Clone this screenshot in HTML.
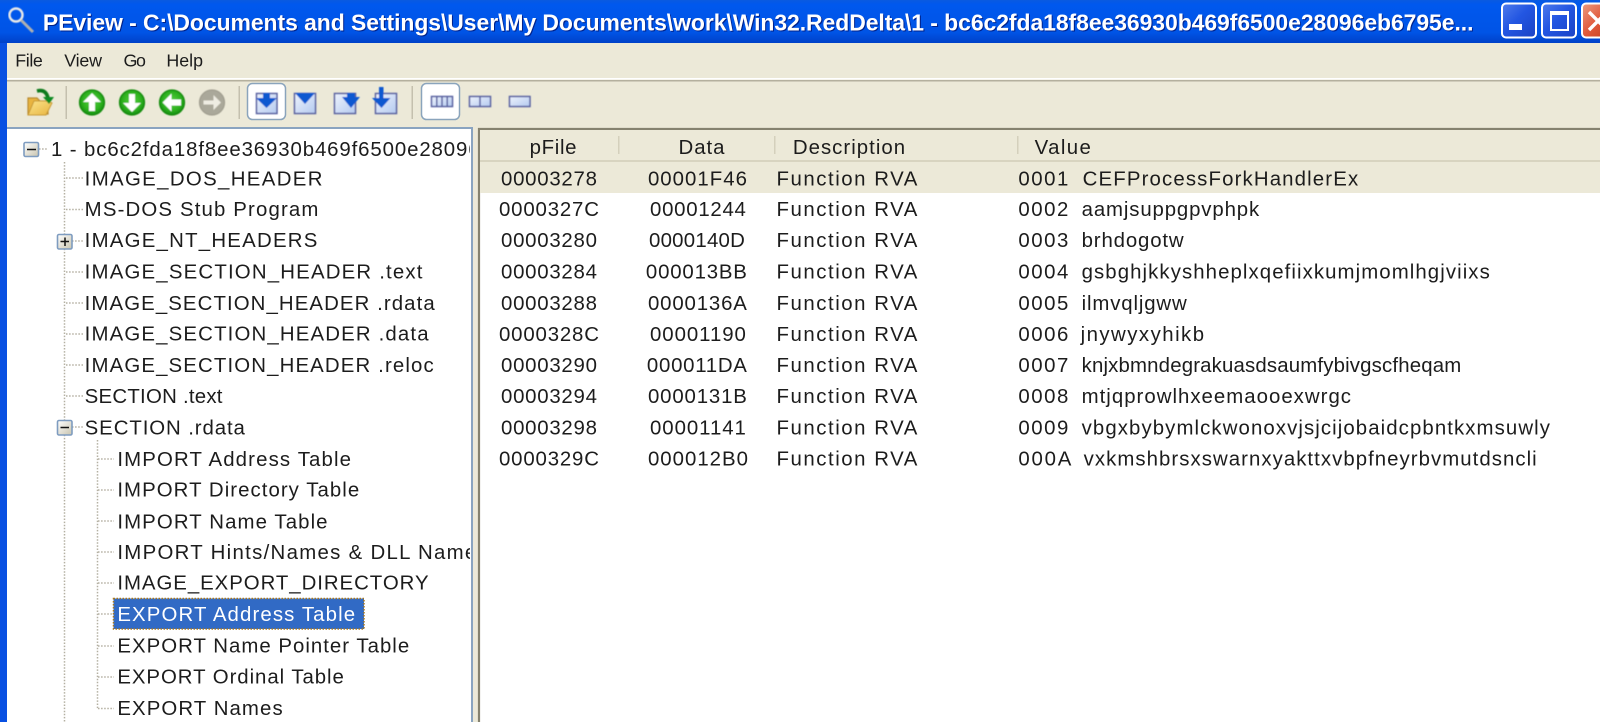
<!DOCTYPE html>
<html><head><meta charset="utf-8"><title>PEview</title>
<style>
html,body{margin:0;padding:0;background:#ece9d8;overflow:hidden}
svg{display:block}
text{font-family:"Liberation Sans",sans-serif;fill:#1c1c1c;white-space:pre}
.t text{font-size:20px}
.d{stroke:#b4b0a2;stroke-width:1.5;stroke-dasharray:1.5 1.6;fill:none}
</style></head><body>
<svg xmlns="http://www.w3.org/2000/svg" width="1600" height="722" viewBox="0 0 1600 722">
<defs>
<linearGradient id="tb" x1="0" y1="0" x2="0" y2="1"><stop offset="0" stop-color="#0a5ae0"/><stop offset=".1" stop-color="#0058ee"/><stop offset=".75" stop-color="#0054e6"/><stop offset="1" stop-color="#0041c8"/></linearGradient>
<linearGradient id="bb" x1="0" y1="0" x2="1" y2="1"><stop offset="0" stop-color="#4f7cec"/><stop offset=".45" stop-color="#2356e2"/><stop offset="1" stop-color="#1a42c4"/></linearGradient>
<linearGradient id="rb" x1="0" y1="0" x2="1" y2="1"><stop offset="0" stop-color="#ec9a80"/><stop offset=".5" stop-color="#e0583a"/><stop offset="1" stop-color="#c03a1c"/></linearGradient>
<radialGradient id="gc" cx=".5" cy=".45" r=".55"><stop offset="0" stop-color="#56d040"/><stop offset=".7" stop-color="#2cb01e"/><stop offset="1" stop-color="#128a0e"/></radialGradient>
<linearGradient id="ib" x1="0" y1="0" x2="1" y2="1"><stop offset="0" stop-color="#eef3fc"/><stop offset="1" stop-color="#b4caf0"/></linearGradient>
<linearGradient id="ex" x1="0" y1="0" x2="1" y2="1"><stop offset="0" stop-color="#fff"/><stop offset="1" stop-color="#c8c4ae"/></linearGradient>
<linearGradient id="fo" x1="0" y1="0" x2="1" y2="1"><stop offset="0" stop-color="#fbe58c"/><stop offset="1" stop-color="#e8b440"/></linearGradient>
<clipPath id="lc"><rect x="0" y="130" width="470" height="592"/></clipPath>
<filter id="bl" x="-5%" y="-5%" width="110%" height="110%"><feGaussianBlur stdDeviation=".35"/></filter>
<filter id="bi" x="-5%" y="-20%" width="110%" height="140%"><feGaussianBlur stdDeviation=".5"/></filter>
</defs>

<rect width="1600" height="722" fill="#ece9d8"/>
<rect x="0" y="0" width="1600" height="43" fill="url(#tb)"/>
<rect x="0" y="43" width="7" height="679" fill="#0850e2"/>

<!-- title icon -->
<g fill="none" filter="url(#bi)">
<circle cx="16" cy="15" r="6.5" stroke="#e8e8e8" stroke-width="2.4"/>
<path d="M21 20 L33 32" stroke="#b0b0b0" stroke-width="3"/>
</g>

<!-- title -->
<g transform="scale(1.0204 1.0198)" filter="url(#bl)">
<text x="43" y="31" font-size="22.5" font-weight="700" textLength="1402" style="fill:#00208a">PEview - C:\Documents and Settings\User\My Documents\work\Win32.RedDelta\1 - bc6c2fda18f8ee36930b469f6500e28096eb6795e...</text>
<text x="42" y="30" font-size="22.5" font-weight="700" textLength="1402" style="fill:#fff">PEview - C:\Documents and Settings\User\My Documents\work\Win32.RedDelta\1 - bc6c2fda18f8ee36930b469f6500e28096eb6795e...</text>
</g>

<!-- window buttons -->
<rect x="1502" y="3.500" width="34" height="34" rx="4" fill="url(#bb)" stroke="#fff" stroke-width="2"/>
<rect x="1509" y="24" width="13" height="6" fill="#fff"/>
<rect x="1542" y="3.500" width="34" height="34" rx="4" fill="url(#bb)" stroke="#fff" stroke-width="2"/>
<rect x="1551" y="13" width="17" height="17" fill="none" stroke="#fff" stroke-width="2"/>
<rect x="1550" y="11" width="19" height="4" fill="#fff"/>
<rect x="1582" y="3.500" width="34" height="34" rx="4" fill="url(#rb)" stroke="#fff" stroke-width="2"/>
<path d="M1589 12 L1607 30 M1607 12 L1589 30" stroke="#fff" stroke-width="3.400"/>

<!-- menu -->
<g transform="scale(1.0204 1.0198)" filter="url(#bl)">
<text x="15" y="65" font-size="17.500" textLength="27">File</text>
<text x="63" y="65" font-size="17.500" textLength="37">View</text>
<text x="121" y="65" font-size="17.500" textLength="22">Go</text>
<text x="163" y="65" font-size="17.500" textLength="36">Help</text>
</g>
<rect x="7" y="78" width="1593" height="1.500" fill="#fff"/>
<rect x="7" y="80" width="1593" height="1.500" fill="#b4b09e"/>

<!-- toolbar -->
<g filter="url(#bi)">
<path d="M28 98 h9 l3 3 h8 v13 h-20 z" fill="#e8b440" stroke="#b8892e" stroke-width="1.200"/>
<path d="M28 115 l6 -14 h14 l4 2 l-6 12 z" fill="url(#fo)" stroke="#c89a36" stroke-width="1"/>
<path d="M37 91 q9 -2 11 7" fill="none" stroke="#0e7a1c" stroke-width="3.600"/>
<path d="M43 97 h11 l-5 7 z" fill="#0e8a20"/>

<circle cx="92" cy="102.500" r="12.500" fill="url(#gc)" stroke="#128a0e" stroke-width="1.200"/>
<path d="M92 93 L101 102 H95 V111 H89 V102 H83 z" fill="#fff"/>
<circle cx="132" cy="102.500" r="12.500" fill="url(#gc)" stroke="#128a0e" stroke-width="1.200"/>
<path d="M132 112 L141 103 H135 V94 H129 V103 H123 z" fill="#fff"/>
<circle cx="172" cy="102.500" r="12.500" fill="url(#gc)" stroke="#128a0e" stroke-width="1.200"/>
<path d="M162.500 102.500 L171.500 93.500 V99.500 H181 V105.500 H171.500 V111.500 z" fill="#fff"/>
<circle cx="212" cy="102.500" r="12.500" fill="#aaa89a" stroke="#a09e90" stroke-width="1.200"/>
<path d="M221 102.500 L213.500 95 V100.500 H203.500 V104.500 H213.500 V110 z" fill="#eeece2"/>

<rect x="256.500" y="93.500" width="20.500" height="20" fill="url(#ib)" stroke="#5860a0" stroke-width="1.500"/>
<path d="M263 93 h7 v5 h7 l-10.500 10 l-10.500 -10 h7 z" fill="#0a58d0"/>
<rect x="294.500" y="93.500" width="21" height="20" fill="url(#ib)" stroke="#5860a0" stroke-width="1.500"/>
<path d="M295 93 h20 l-10 11 z" fill="#0a58d0"/>
<rect x="334.500" y="93.500" width="21" height="20" fill="url(#ib)" stroke="#5860a0" stroke-width="1.500"/>
<path d="M347 93 h8 v4 h5 l-9 11 l-9 -11 h5 z" fill="#0a58d0"/>
<rect x="375.500" y="93.500" width="21" height="20" fill="url(#ib)" stroke="#5860a0" stroke-width="1.500"/>
<path d="M379 87 h4.500 v11 h7 l-9 10 l-9.500 -10 h7 z" fill="#0a58d0"/>
</g>
<rect x="65.500" y="86" width="1.500" height="33" fill="#c4c0ae"/>
<rect x="238.500" y="86" width="1.500" height="33" fill="#c4c0ae"/>
<rect x="411.500" y="86" width="1.500" height="33" fill="#c4c0ae"/>

<rect x="247.500" y="83.500" width="38" height="36" rx="5" fill="#fff" stroke="#8aa4bc" stroke-width="1.500"/>
<g filter="url(#bi)">
<rect x="256.500" y="93.500" width="20.500" height="20" fill="url(#ib)" stroke="#5860a0" stroke-width="1.500"/>
<path d="M263 93 h7 v5 h7 l-10.500 10 l-10.500 -10 h7 z" fill="#0a58d0"/>
</g>

<rect x="421.500" y="83.500" width="38" height="36" rx="5" fill="#fff" stroke="#8aa4bc" stroke-width="1.500"/>
<g stroke="#5860a0" stroke-width="1.500" fill="url(#ib)" filter="url(#bi)">
<rect x="431.500" y="96.500" width="21" height="10"/>
<path d="M436.800 96.500 v10 M442 96.500 v10 M447.200 96.500 v10" fill="none"/>
<rect x="469.500" y="96.500" width="21" height="10"/>
<path d="M480 96.500 v10" fill="none"/>
<rect x="509.500" y="96.500" width="20.500" height="10"/>
</g>

<!-- left panel -->
<rect x="7" y="127" width="466" height="595" fill="#fff"/>
<path d="M7 128 H472 V722" fill="none" stroke="#8aa4c0" stroke-width="2"/>

<!-- right panel -->
<rect x="478" y="128" width="1122" height="594" fill="#fff"/>
<path d="M479 722 V129 H1600" fill="none" stroke="#85826f" stroke-width="2.200"/>
<rect x="480" y="130" width="1120" height="31" fill="#ece9d8"/>
<rect x="480" y="160" width="1120" height="2" fill="#d8d4c0"/>
<rect x="480" y="162" width="1120" height="31" fill="#ece9d8"/>
<g fill="#d4d0bc">
<rect x="618" y="136" width="1.500" height="18"/>
<rect x="774" y="136" width="1.500" height="18"/>
<rect x="1017" y="136" width="1.500" height="18"/>
</g>

<!-- tree lines -->
<path class="d" d="M64.500 162 V722"/>
<path class="d" d="M66 178 H83 M66 209.500 H83 M72 241 H83 M66 272 H83 M66 303 H83 M66 334 H83 M66 365 H83 M66 396 H83 M72 427 H83"/>
<path class="d" d="M97.500 440 V709"/>
<path class="d" d="M98 459 H114 M98 490 H114 M98 521 H114 M98 552 H114 M98 583 H114 M98 614 H114 M98 646 H114 M98 677 H114 M98 708.500 H114"/>
<path class="d" d="M39 149 H48"/>

<!-- expanders -->
<g stroke="#7e9cc0" stroke-width="1.600" fill="url(#ex)">
<rect x="24" y="142.500" width="14.500" height="14" rx="1.500"/>
<rect x="57.500" y="234.500" width="14.500" height="14.500" rx="1.500"/>
<rect x="57.500" y="420.500" width="14.500" height="14.500" rx="1.500"/>
</g>
<path d="M27 149.500 H36 M60.500 241.500 H69 M65 237.500 V246 M60.500 427.500 H69" stroke="#111" stroke-width="1.500"/>

<!-- selection -->
<rect x="113.500" y="598.500" width="250.500" height="30.500" fill="#316ac5" stroke="#a87820" stroke-width="1.500" stroke-dasharray="1.500 1.500"/>

<g filter="url(#bl)">
<g clip-path="url(#lc)">
<g class="t" transform="scale(1.0204 1.0198)">
<text x="50" y="153" textLength="420">1 - bc6c2fda18f8ee36930b469f6500e28096</text>
<text x="83" y="182" textLength="233">IMAGE_DOS_HEADER</text>
<text x="83" y="212" textLength="229">MS-DOS Stub Program</text>
<text x="83" y="242" textLength="228">IMAGE_NT_HEADERS</text>
<text x="83" y="273" textLength="331">IMAGE_SECTION_HEADER .text</text>
<text x="83" y="304" textLength="343">IMAGE_SECTION_HEADER .rdata</text>
<text x="83" y="334" textLength="337">IMAGE_SECTION_HEADER .data</text>
<text x="83" y="365" textLength="342">IMAGE_SECTION_HEADER .reloc</text>
<text x="83" y="395" textLength="135">SECTION .text</text>
<text x="83" y="426" textLength="157">SECTION .rdata</text>
<text x="115" y="457" textLength="229">IMPORT Address Table</text>
<text x="115" y="487" textLength="237">IMPORT Directory Table</text>
<text x="115" y="518" textLength="206">IMPORT Name Table</text>
<text x="115" y="548" textLength="363">IMPORT Hints/Names &amp; DLL Names</text>
<text x="115" y="578" textLength="305">IMAGE_EXPORT_DIRECTORY</text>
<text x="115" y="609" textLength="233" style="fill:#fff">EXPORT Address Table</text>
<text x="115" y="640" textLength="286">EXPORT Name Pointer Table</text>
<text x="115" y="670" textLength="222">EXPORT Ordinal Table</text>
<text x="115" y="701" textLength="162">EXPORT Names</text>
</g>
</g>

<g class="t" transform="scale(1.0204 1.0198)">
<text x="519" y="151" textLength="46">pFile</text>
<text x="665" y="151" textLength="45">Data</text>
<text x="777" y="151" textLength="110">Description</text>
<text x="1014" y="151" textLength="55">Value</text>

<text x="491" y="182" textLength="94">00003278</text>
<text x="635" y="182" textLength="97">00001F46</text>
<text x="761" y="182" textLength="138">Function RVA</text>
<text x="998" y="182" textLength="49">0001</text>
<text x="1061" y="182" textLength="270">CEFProcessForkHandlerEx</text>

<text x="489" y="212" textLength="98">0000327C</text>
<text x="637" y="212" textLength="94">00001244</text>
<text x="761" y="212" textLength="138">Function RVA</text>
<text x="998" y="212" textLength="49">0002</text>
<text x="1060" y="212" textLength="174">aamjsuppgpvphpk</text>

<text x="491" y="242" textLength="94">00003280</text>
<text x="636" y="242" textLength="94">0000140D</text>
<text x="761" y="242" textLength="138">Function RVA</text>
<text x="998" y="242" textLength="49">0003</text>
<text x="1060" y="242" textLength="100">brhdogotw</text>

<text x="491" y="273" textLength="94">00003284</text>
<text x="633" y="273" textLength="99">000013BB</text>
<text x="761" y="273" textLength="138">Function RVA</text>
<text x="998" y="273" textLength="49">0004</text>
<text x="1060" y="273" textLength="400">gsbghjkkyshheplxqefiixkumjmomlhgjviixs</text>

<text x="491" y="304" textLength="94">00003288</text>
<text x="635" y="304" textLength="97">0000136A</text>
<text x="761" y="304" textLength="138">Function RVA</text>
<text x="998" y="304" textLength="49">0005</text>
<text x="1060" y="304" textLength="103">ilmvqljgww</text>

<text x="489" y="334.500" textLength="98">0000328C</text>
<text x="637" y="334.500" textLength="94">00001190</text>
<text x="761" y="334.500" textLength="138">Function RVA</text>
<text x="998" y="334.500" textLength="49">0006</text>
<text x="1059" y="334.500" textLength="121">jnywyxyhikb</text>

<text x="491" y="365" textLength="94">00003290</text>
<text x="634" y="365" textLength="98">000011DA</text>
<text x="761" y="365" textLength="138">Function RVA</text>
<text x="998" y="365" textLength="49">0007</text>
<text x="1060" y="365" textLength="372">knjxbmndegrakuasdsaumfybivgscfheqam</text>

<text x="491" y="395" textLength="94">00003294</text>
<text x="635" y="395" textLength="97">0000131B</text>
<text x="761" y="395" textLength="138">Function RVA</text>
<text x="998" y="395" textLength="49">0008</text>
<text x="1060" y="395" textLength="264">mtjqprowlhxeemaooexwrgc</text>

<text x="491" y="426" textLength="94">00003298</text>
<text x="637" y="426" textLength="94">00001141</text>
<text x="761" y="426" textLength="138">Function RVA</text>
<text x="998" y="426" textLength="49">0009</text>
<text x="1060" y="426" textLength="459">vbgxbybymlckwonoxvjsjcijobaidcpbntkxmsuwly</text>

<text x="489" y="456.500" textLength="98">0000329C</text>
<text x="635" y="456.500" textLength="98">000012B0</text>
<text x="761" y="456.500" textLength="138">Function RVA</text>
<text x="998" y="456.500" textLength="52">000A</text>
<text x="1062" y="456.500" textLength="444">vxkmshbrsxswarnxyakttxvbpfneyrbvmutdsncli</text>
</g>
</g>
</svg>
</body></html>
